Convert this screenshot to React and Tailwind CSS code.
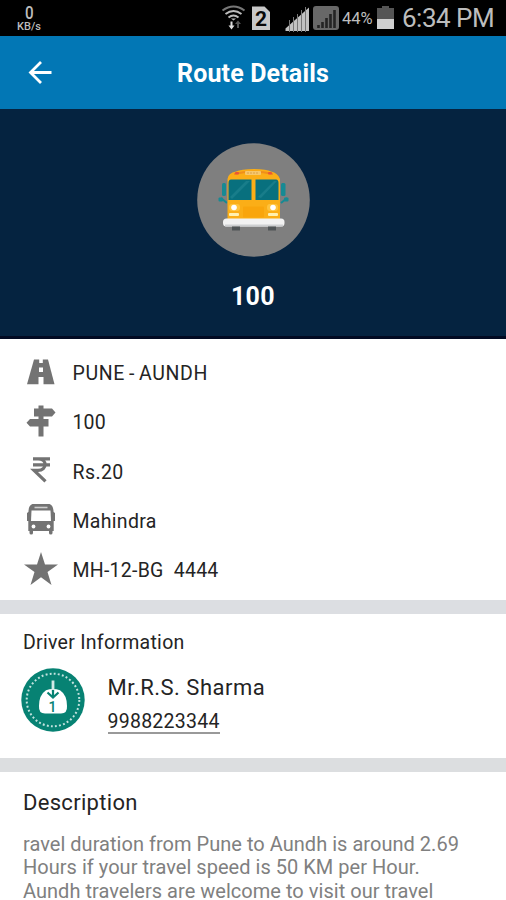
import React from "react";

function RoadIcon() {
  return (
    <svg width="30" height="26" viewBox="0 0 30 26" fill="#737373">
      <path d="M8 0.5H22L28.500 25.200H1Z" />
      <path d="M13.200 0H16.800V4H13.200ZM13 8.500H17V13H13ZM12.500 18H17.500V26H12.500Z" fill="#fff" />
    </svg>
  );
}

function SignpostIcon() {
  return (
    <svg width="30" height="32" viewBox="0 0 30 32" fill="#737373">
      <path d="M12.500 0.500H17.500V3.500H26L29.500 7.500L26 11.500H17.500V14H22.500V21.500H17.500V31.500H12.500V21.500H4L0.500 17.700L4 14H12.500V11.500H8V3.500H12.500Z" />
    </svg>
  );
}

function RupeeIcon() {
  return (
    <svg width="30" height="26" viewBox="0 0 30 26" fill="none" stroke="#737373" strokeWidth="3.200">
      <path d="M7 1.800H24M7 7.800H24M7 1.800H12C21.500 1.800 21.500 13.300 12 13.300H8L19.500 24.300" />
    </svg>
  );
}

function BusIcon() {
  return (
    <svg width="30" height="31" viewBox="0 0 30 31" fill="#737373">
      <path d="M7.500 0H22.500C26 0 27.400 3.500 27.600 8L29 9V17H27.700V27H26.500V29Q26.500 30.500 24.700 30.500Q23 30.500 23 29V27H7V29Q7 30.500 5.300 30.500Q3.500 30.500 3.500 29V27H2.300V17H1V9L2.400 8C2.600 3.500 4 0 7.500 0Z" />
      <path d="M8.500 2.700H21.500V4.300H8.500Z" fill="#cfcfcf" />
      <path d="M5.500 6.500H24.500L25 17H5Z" fill="#fff" />
      <circle cx="7.500" cy="22.500" r="1.900" fill="#fff" />
      <circle cx="22.500" cy="22.500" r="1.900" fill="#fff" />
    </svg>
  );
}

function StarIcon() {
  return (
    <svg width="34" height="34" viewBox="0 0 34 34" fill="#737373">
      <path d="M17 0L21 12.400H34L23.500 20L27.500 33L17 25.200L6.500 33L10.500 20L0 12.400H13Z" />
    </svg>
  );
}

function SchoolBus() {
  return (
    <svg width="113" height="114" viewBox="0 0 113 114">
      <ellipse cx="56.500" cy="57" rx="56.300" ry="56.800" fill="#7f7f7f" />
      <path d="M30 60L24 55M84 60L90 55" stroke="#168a94" strokeWidth="2" />
      <rect x="25" y="40" width="4" height="13" rx="1.500" fill="#168a94" />
      <rect x="84" y="40" width="4.500" height="13" rx="1.500" fill="#168a94" />
      <rect x="21.500" y="54.500" width="4.500" height="4" rx="1" fill="#168a94" />
      <rect x="87" y="54.500" width="4.500" height="4" rx="1" fill="#168a94" />
      <path d="M30.500 77V36Q31 30 39 28.500Q44 26 57 26Q70 26 74 28.500Q81 30 83 36V77Z" fill="#fbae17" />
      <path d="M37 31Q56 26.500 76 31" stroke="#ef8f1a" strokeWidth="2" fill="none" />
      <rect x="38" y="29" width="4" height="2.500" rx="1" fill="#ec5635" />
      <rect x="71" y="29" width="4" height="2.500" rx="1" fill="#ec5635" />
      <rect x="48" y="28" width="16" height="4" rx="1" fill="#f6c76b" />
      <path d="M50 30H62" stroke="#dba04f" strokeDasharray="2 1" />
      <path d="M34 36.500H54.500V57H31.500V40Q31.500 36.500 34 36.500ZM58.500 36.500H79Q81.500 36.500 81.500 40V57H58.500Z" fill="#08707e" />
      <path d="M33 54L49 38H53L35 56ZM61 54L77 38H80L64 55Z" fill="#238692" opacity=".6" />
      <rect x="46" y="63.500" width="21" height="11" rx="1" fill="#f9a50c" />
      <rect x="32" y="61" width="11" height="7" rx="3" fill="#ffc33c" />
      <rect x="70" y="61" width="11" height="7" rx="3" fill="#ffc33c" />
      <circle cx="37" cy="64.500" r="2.800" fill="#fff" />
      <circle cx="76" cy="64.500" r="2.800" fill="#fff" />
      <rect x="32" y="70" width="10" height="3" rx="1" fill="#fff0b0" />
      <rect x="71" y="70" width="10" height="3" rx="1" fill="#fff0b0" />
      <rect x="26" y="75.500" width="61.500" height="8" rx="3.500" fill="#f2f2f2" />
      <path d="M28 82.500H86" stroke="#cdcfd1" strokeWidth="2" />
      <path d="M35 83.500H43V87.500H35ZM71 83.500H79V87.500H71Z" fill="#505557" />
    </svg>
  );
}

function DriverBadge() {
  return (
    <svg width="64" height="64" viewBox="0 0 64 64">
      <circle cx="32" cy="32" r="31.700" fill="#078273" />
      <circle cx="32" cy="32" r="26.300" fill="none" stroke="#c3e3df" strokeWidth="2" strokeDasharray="1.900 2.230" />
      <path d="M18 38Q18 27 25 22.300Q32 19.500 39 22.300Q46 27 46 38Q46.500 45.500 40 45.500H24Q17.500 45.500 18 38Z" fill="#fff" />
      <path d="M32 12.500V24" stroke="#d3eae7" strokeWidth="2.800" />
      <path d="M26.500 24.500L32 29.500L37.500 24.500M32 22V28" stroke="#078273" strokeWidth="2.200" fill="none" />
      <text x="31.500" y="43.800" textAnchor="middle" fontSize="14" fontWeight="500" fill="#078273" fontFamily="Roboto, sans-serif">1</text>
    </svg>
  );
}

function StatusIcons() {
  return (
    <svg width="119" height="32" viewBox="221 2 119 32">
      <g fill="none" stroke="#bcbcbc" strokeWidth="2">
        <path d="M222.500 10.500Q233.500 2.500 244.500 10.500" stroke="#777" />
        <path d="M225.500 14Q233.500 8 241.500 14M228.500 17.500Q233.500 13.500 238.500 17.500" />
      </g>
      <path d="M231 18.500H236L233.500 20.500Z" fill="#bcbcbc" />
      <path d="M230.500 21.500H232.500V25.500H234.500L231.500 29.500L228.500 25.500H230.500Z" fill="#ddd" />
      <path d="M237 28V24H235L238 20.500L241 24H239V28Z" fill="#555" />
      <path d="M252 6.500H264.500L270 12V30H252Z" fill="#c8c8c8" />
      <text x="261" y="26" textAnchor="middle" fontSize="21" fontWeight="700" fill="#080808" fontFamily="Roboto, sans-serif">2</text>
      <path d="M285.500 31V28.500L309 7.500V31Z" fill="#c2c2c2" />
      <path d="M289.500 20V32M293.500 17V32M297.500 14V32M301.500 10V32M305.500 7V32" stroke="#777" strokeWidth="1" />
      <rect x="313" y="6" width="26" height="24" rx="3" fill="#686868" />
      <path d="M318.500 28V25M322.500 28V22M326.500 28V18M330.500 28V14M334.500 28V10" stroke="#242424" strokeWidth="2.600" />
    </svg>
  );
}

const details = [
  { Icon: RoadIcon, text: "PUNE - AUNDH", cls: "tracking-[0.6px] [word-spacing:-1.3px]" },
  { Icon: SignpostIcon, text: "100", cls: "tracking-[0.15px]" },
  { Icon: RupeeIcon, text: "Rs.20", cls: "tracking-[0.4px]" },
  { Icon: BusIcon, text: "Mahindra", cls: "tracking-[0.3px]" },
  { Icon: StarIcon, text: "MH-12-BG  4444", cls: "tracking-[0.25px]" },
];

export default function App() {
  return (
    <div className="flex h-[900px] w-[506px] flex-col overflow-hidden bg-white font-['Roboto',sans-serif] text-[#242424]">
      <div className="flex h-9 shrink-0 items-start bg-black text-[#bdbdbd]">
        <div className="ml-[14px] mt-[4px] flex w-[30px] flex-col items-center">
          <span className="origin-center scale-x-[0.82] text-[18.5px] font-medium leading-[18px]">0</span>
          <span className="text-[11px] font-medium leading-[9px]">KB/s</span>
        </div>
        <div className="ml-[177px] mt-[2px] shrink-0"><StatusIcons /></div>
        <span className="ml-[2px] mt-[9px] w-[33px] whitespace-nowrap text-[16.5px] leading-[20px]">44%</span>
        <div className="ml-[2px] mt-[6px] flex w-[17px] shrink-0 flex-col items-center">
          <div className="h-[2px] w-[7px] bg-[#555]" />
          <div className="h-[11px] w-full bg-[#555]" />
          <div className="h-[10px] w-full bg-[#cfcfcf]" />
        </div>
        <span className="ml-[8px] mt-[3px] whitespace-nowrap text-[26px] leading-[30px] tracking-[-0.5px]">6:34 PM</span>
      </div>

      <header className="flex h-[73px] shrink-0 items-center bg-[#0277b5]">
        <svg className="ml-7 shrink-0" width="24" height="24" viewBox="0 0 24 24" fill="none" stroke="#fff" strokeWidth="2.800">
          <path d="M23.500 11.500H3M13 1L2.500 11.500L13 22" />
        </svg>
        <h1 className="ml-[125px] mt-[3px] whitespace-nowrap text-[25px] font-bold leading-[30px] tracking-[0.15px] text-white">Route Details</h1>
      </header>

      <section className="flex h-[230px] shrink-0 flex-col items-center border-b-[3px] border-[#020a22] bg-[#052340] pt-[34px]">
        <SchoolBus />
        <div className="mt-[25px] text-[25px] font-bold leading-[30px] tracking-[0.4px] text-white">100</div>
      </section>

      <ul className="flex h-[261px] shrink-0 flex-col pt-[8px]">
        {details.map(({ Icon, text, cls }) => (
          <li key={text} className="flex h-[49.25px] items-center">
            <div className="ml-[21px] flex w-[39px] justify-center"><Icon /></div>
            <span className={"ml-[12.5px] mt-[5px] whitespace-pre text-[19.5px] leading-6 " + cls}>{text}</span>
          </li>
        ))}
      </ul>

      <div className="h-[14px] shrink-0 bg-[#dcdee2]" />

      <section className="h-[144px] shrink-0 pt-[17px]">
        <h2 className="ml-[23px] text-[19.5px] leading-6 tracking-[0.28px]">Driver Information</h2>
        <div className="ml-[21px] mt-[13px] flex">
          <DriverBadge />
          <div className="ml-[22.5px] flex flex-col items-start pt-[6px]">
            <span className="text-[22px] leading-[28px] tracking-[0.5px]">Mr.R.S. Sharma</span>
            <span className="mt-[10px] border-b-2 border-[#999] text-[19.5px] leading-[20px] tracking-[0.25px]">9988223344</span>
          </div>
        </div>
      </section>

      <div className="h-[14px] shrink-0 bg-[#dcdee0]" />

      <section className="shrink-0 pl-[23px] pt-[17px]">
        <h2 className="text-[22px] leading-[28px] tracking-[0.3px]">Description</h2>
        <p className="mt-[16px] whitespace-pre text-[20px] leading-[23.3px] tracking-[0.03px] text-[#808080]">
          {"ravel duration from Pune to Aundh is around 2.69\nHours if your travel speed is 50 KM per Hour.\nAundh travelers are welcome to visit our travel"}
        </p>
      </section>
    </div>
  );
}
